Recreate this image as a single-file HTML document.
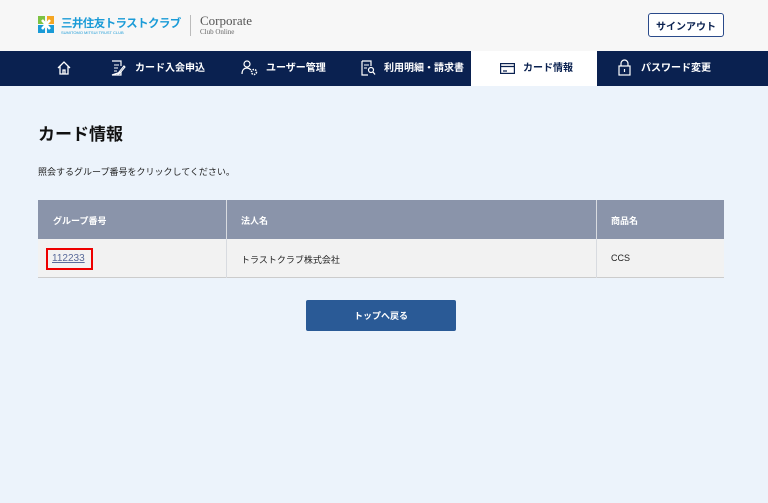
<!DOCTYPE html>
<html><head><meta charset="utf-8"><style>
*{margin:0;padding:0;box-sizing:border-box}
body{width:768px;height:503px;overflow:hidden;background:#ecf3fb;font-family:"Liberation Sans","Noto Sans CJK JP",sans-serif;position:relative;color:#222}
.hd{position:absolute;left:0;top:0;width:768px;height:51px;background:#f7f7f7}
.nav{position:absolute;left:0;top:51px;width:768px;height:35px;background:#0a2150}
.ni{position:absolute;top:0;height:35px;line-height:35px;color:#fff;font-size:10px;font-weight:bold}
.act{position:absolute;left:471px;top:51px;width:126px;height:35px;background:#fff}
svg{position:absolute}
.abs{position:absolute}
.c{display:flex;align-items:center;justify-content:center}
</style></head><body>
<div class="hd">
 <svg style="left:38px;top:16px" width="16" height="17" viewBox="0 0 16 17"><rect x="0" y="0" width="7" height="8" fill="#7dc242"/><rect x="9" y="0" width="7" height="8" fill="#f5a623"/><rect x="0" y="9" width="7" height="8" fill="#1a9bd7"/><rect x="9" y="9" width="7" height="8" fill="#1a9bd7"/><path d="M4 4L12 13M12 4L4 13" stroke="#fff" stroke-width="2.5"/></svg>
 <div class="abs" style="left:61px;top:15px;font-size:11.5px;color:#1a9bd7;font-weight:bold;letter-spacing:-0.6px;white-space:nowrap">三井住友トラストクラブ</div>
 <div class="abs" style="left:61px;top:30px;font-size:4px;color:#1a9bd7;white-space:nowrap">SUMITOMO MITSUI TRUST CLUB</div>
 <div class="abs" style="left:190px;top:15px;width:1px;height:21px;background:#bbb"></div>
 <div class="abs" style="left:200px;top:13px;font-family:'Liberation Serif',serif;font-size:13px;color:#555">Corporate</div>
 <div class="abs" style="left:200px;top:28px;font-family:'Liberation Serif',serif;font-size:7px;color:#666">Club Online</div>
 <div class="abs c" style="left:648px;top:13px;width:76px;height:24px;border:1px solid #2a4a8a;border-radius:3px;background:#fff;font-size:10px;color:#0a2150;font-weight:bold">サインアウト</div>
</div>
<div class="nav"></div>
<div class="act"></div>
<svg style="left:57px;top:61px" width="14" height="14" viewBox="0 0 14 14"><path d="M1 7L7 1L13 7M3 5V13H11V5M6 13V9H8V13" fill="none" stroke="#fff" stroke-width="1.3"/></svg>
<svg style="left:110px;top:60px" width="16" height="16" viewBox="0 0 16 16"><path d="M2 1H11V6M11 12V15H2Z" fill="none" stroke="#fff" stroke-width="1.2"/><path d="M4 5H9M4 8H8M4 11H7M14 6L9 12L8 14L10 13L15 7Z" fill="none" stroke="#fff" stroke-width="1.1"/></svg>
<div class="ni" style="left:135px;top:51px">カード入会申込</div>
<svg style="left:241px;top:60px" width="18" height="16" viewBox="0 0 18 16"><circle cx="6" cy="4" r="3" fill="none" stroke="#fff" stroke-width="1.2"/><path d="M1 14C1 10 3 8 6 8C8 8 9 9 10 10" fill="none" stroke="#fff" stroke-width="1.2"/><circle cx="13" cy="12" r="2.5" fill="none" stroke="#fff" stroke-width="1.5" stroke-dasharray="1.5 1"/></svg>
<div class="ni" style="left:266px;top:51px">ユーザー管理</div>
<svg style="left:360px;top:60px" width="16" height="16" viewBox="0 0 16 16"><path d="M2 1H11V6M8 15H2V1" fill="none" stroke="#fff" stroke-width="1.2"/><path d="M4 5H9M4 8H7" stroke="#fff" stroke-width="1.1"/><circle cx="11" cy="10" r="2.5" fill="none" stroke="#fff" stroke-width="1.2"/><path d="M13 12L15 14.5" stroke="#fff" stroke-width="1.3"/></svg>
<div class="ni" style="left:384px;top:51px">利用明細・請求書</div>
<svg style="left:500px;top:63px" width="15" height="11" viewBox="0 0 15 11"><rect x="0.6" y="0.6" width="13.8" height="9.8" fill="none" stroke="#0a2150" stroke-width="1.2"/><path d="M1 3.5H14M3 8H7" stroke="#0a2150" stroke-width="1.2"/></svg>
<div class="ni" style="left:523px;top:51px;color:#0a2150">カード情報</div>
<svg style="left:618px;top:59px" width="13" height="17" viewBox="0 0 13 17"><path d="M3 7V4.5A3.5 3.5 0 0 1 10 4.5V7" fill="none" stroke="#fff" stroke-width="1.2"/><rect x="1" y="7" width="11" height="9" fill="none" stroke="#fff" stroke-width="1.2"/><path d="M6.5 10V13" stroke="#fff" stroke-width="1.2"/></svg>
<div class="ni" style="left:641px;top:51px">パスワード変更</div>

<div class="abs" style="left:38px;top:120px;font-size:17px;font-weight:bold;color:#111">カード情報</div>
<div class="abs" style="left:38px;top:165px;font-size:9px;color:#222">照会するグループ番号をクリックしてください。</div>

<div class="abs" style="left:38px;top:200px;width:686px;height:39px;background:#8a94aa"></div>
<div class="abs" style="left:38px;top:239px;width:686px;height:39px;background:#f2f2f2;border-bottom:1px solid #ccc"></div>
<div class="abs" style="left:226px;top:200px;width:1px;height:78px;background:#d8dbe0"></div>
<div class="abs" style="left:596px;top:200px;width:1px;height:78px;background:#d8dbe0"></div>
<div class="abs" style="left:53px;top:214px;font-size:9px;color:#fff;font-weight:bold">グループ番号</div>
<div class="abs" style="left:241px;top:214px;font-size:9px;color:#fff;font-weight:bold">法人名</div>
<div class="abs" style="left:611px;top:214px;font-size:9px;color:#fff;font-weight:bold">商品名</div>
<div class="abs" style="left:46px;top:248px;width:47px;height:22px;border:2px solid #e00"></div>
<div class="abs" style="left:52px;top:253px;font-size:10px;color:#5a6a9a;text-decoration:underline">112233</div>
<div class="abs" style="left:241px;top:253px;font-size:9px;color:#222">トラストクラブ株式会社</div>
<div class="abs" style="left:611px;top:253px;font-size:9px;color:#222">CCS</div>

<div class="abs c" style="left:306px;top:300px;width:150px;height:31px;background:#2a5a96;border-radius:2px;color:#fff;font-size:9px;font-weight:bold">トップへ戻る</div>
</body></html>
